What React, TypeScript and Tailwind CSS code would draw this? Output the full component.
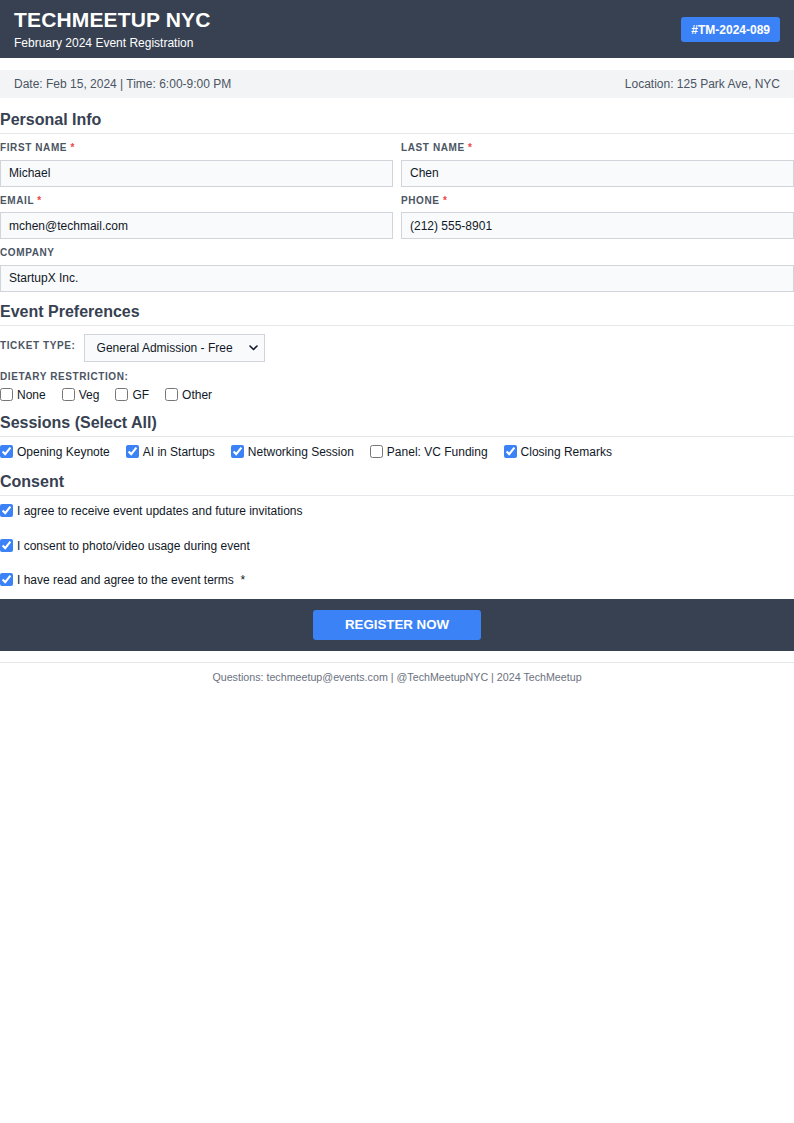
import React from 'react';

const font = { fontFamily: '"Liberation Sans", Arial, Helvetica, sans-serif' };

function Field({ label, value, required }: { label: string; value: string; required?: boolean }) {
  return (
    <div className="flex flex-col">
      <label className="text-[10px] leading-3 font-bold uppercase tracking-[0.06em] text-[#4b5563] mb-[5.5px]">
        {label}
        {required && <span className="text-[#ef4444]"> *</span>}
      </label>
      <input
        readOnly
        value={value}
        className="h-[27px] w-full border border-[#d1d5db] bg-[#f9fafb] px-2 text-[12px] text-[#111827] outline-none"
      />
    </div>
  );
}

function SectionTitle({ children, className = '' }: { children: React.ReactNode; className?: string }) {
  return (
    <h2 className={`text-[16px] leading-5 font-bold text-[#374151] pb-[3px] border-b border-[#e5e7eb] ${className}`}>
      {children}
    </h2>
  );
}

function Check({ label, checked }: { label: React.ReactNode; checked?: boolean }) {
  return (
    <label className="flex items-center gap-1 text-[12px] text-[#111827]">
      <input type="checkbox" defaultChecked={checked} className="m-0 h-[13px] w-[13px] accent-[#3b82f6]" />
      <span>{label}</span>
    </label>
  );
}

export default function App() {
  const sessions = [
    { label: 'Opening Keynote', checked: true },
    { label: 'AI in Startups', checked: true },
    { label: 'Networking Session', checked: true },
    { label: 'Panel: VC Funding', checked: false },
    { label: 'Closing Remarks', checked: true },
  ];

  return (
    <div className="w-[794px] min-h-[1123px] bg-white" style={font}>
      {/* header */}
      <header className="bg-[#374151] flex items-center justify-between pl-[14px] pr-[14px] pt-2 pb-[7px]">
        <div>
          <h1 className="text-[21px] leading-6 font-bold text-white tracking-[0.15px]">TECHMEETUP NYC</h1>
          <p className="text-[12px] leading-4 text-white mt-[3px]">February 2024 Event Registration</p>
        </div>
        <div className="bg-[#3b82f6] text-white text-[12px] font-bold rounded-[3px] h-[25px] px-[10px] flex items-center">
          #TM-2024-089
        </div>
      </header>

      <div className="mt-3 h-7 bg-[#f3f4f6] flex items-center justify-between px-[14px] text-[12px] text-[#4b5563]">
        <span>Date: Feb 15, 2024 | Time: 6:00-9:00 PM</span>
        <span>Location: 125 Park Ave, NYC</span>
      </div>

      {/* personal */}
      <SectionTitle className="mt-3">Personal Info</SectionTitle>
      <div className="mt-2 grid grid-cols-2 gap-x-2 gap-y-2">
        <Field label="First Name" value="Michael" required />
        <Field label="Last Name" value="Chen" required />
        <Field label="Email" value="mchen@techmail.com" required />
        <Field label="Phone" value="(212) 555-8901" required />
        <div className="col-span-2">
          <Field label="Company" value="StartupX Inc." />
        </div>
      </div>

      {/* preferences */}
      <SectionTitle className="mt-[10px]">Event Preferences</SectionTitle>
      <div className="mt-2 flex items-center gap-2">
        <span className="text-[10px] font-bold uppercase tracking-[0.06em] text-[#4b5563] -mt-1">Ticket Type:</span>
        <div className="relative">
          <select
            defaultValue="ga"
            className="appearance-none h-[28px] w-[181px] border border-[#d1d5db] bg-[#f9fafb] pl-3 pr-6 text-[12px] text-[#111827] outline-none"
          >
            <option value="ga">General Admission - Free</option>
            <option value="vip">VIP</option>
          </select>
          <svg
            className="pointer-events-none absolute right-[7px] top-1/2 -translate-y-1/2"
            width="9"
            height="6"
            viewBox="0 0 9 6"
            fill="none"
          >
            <path d="M1 1l3.5 3.5L8 1" stroke="#111827" strokeWidth="1.6" strokeLinecap="round" strokeLinejoin="round" />
          </svg>
        </div>
      </div>
      <div className="mt-[9px] text-[10px] leading-3 font-bold uppercase tracking-[0.06em] text-[#4b5563]">
        Dietary Restriction:
      </div>
      <div className="mt-[3px] flex items-center gap-4">
        <Check label="None" />
        <Check label="Veg" />
        <Check label="GF" />
        <Check label="Other" />
      </div>

      {/* sessions */}
      <SectionTitle className="mt-[9px]">Sessions (Select All)</SectionTitle>
      <div className="mt-[6px] flex items-center gap-4">
        {sessions.map((s) => (
          <Check key={s.label} label={s.label} checked={s.checked} />
        ))}
      </div>

      {/* consent */}
      <SectionTitle className="mt-[11px]">Consent</SectionTitle>
      <div className="mt-[5px] flex flex-col">
        <div className="h-5 flex items-center">
          <Check label="I agree to receive event updates and future invitations" checked />
        </div>
        <div className="h-5 mt-[15px] flex items-center">
          <Check label="I consent to photo/video usage during event" checked />
        </div>
        <div className="h-5 mt-[14px] flex items-center">
          <Check label={<>I have read and agree to the event terms &nbsp;*</>} checked />
        </div>
      </div>

      <div className="mt-[9px] bg-[#374151] h-[52px] flex items-center justify-center">
        <button className="bg-[#3b82f6] text-white text-[13.3px] font-bold rounded-[3px] h-[30px] w-[168px]">
          REGISTER NOW
        </button>
      </div>

      <footer className="mt-[11px] border-t border-[#e5e7eb] pt-[6px] text-center text-[10.7px] text-[#6b7280]">
        Questions: techmeetup@events.com | @TechMeetupNYC | 2024 TechMeetup
      </footer>
    </div>
  );
}
